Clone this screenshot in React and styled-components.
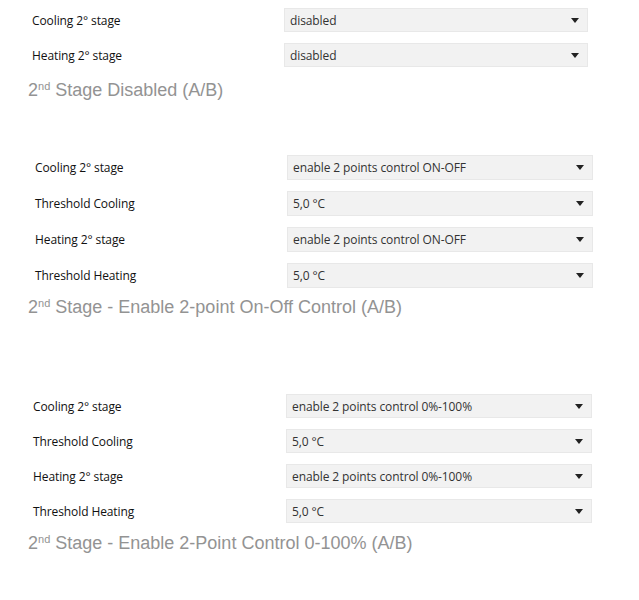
import styled, { createGlobalStyle } from "styled-components";

const GlobalStyle = createGlobalStyle`
    body {
        margin: 0;
        background: #fff;
    }
`;

const sections = [
    {
        top: 8,
        labelLeft: 32,
        labelWidth: 252,
        selectWidth: 304,
        rowHeight: 24,
        captionGap: 12,
        rows: [
            ["Cooling 2° stage", "disabled"],
            ["Heating 2° stage", "disabled"],
        ],
        caption: ["nd", " Stage Disabled (A/B)"],
    },
    {
        top: 54,
        labelLeft: 35,
        labelWidth: 252,
        selectWidth: 306,
        rowHeight: 25,
        captionGap: 8,
        rows: [
            ["Cooling 2° stage", "enable 2 points control ON-OFF"],
            ["Threshold Cooling", "5,0 °C"],
            ["Heating 2° stage", "enable 2 points control ON-OFF"],
            ["Threshold Heating", "5,0 °C"],
        ],
        caption: ["nd", " Stage - Enable 2-point On-Off Control (A/B)"],
    },
    {
        top: 76,
        labelLeft: 33,
        labelWidth: 253,
        selectWidth: 306,
        rowHeight: 24,
        captionGap: 9,
        rows: [
            ["Cooling 2° stage", "enable 2 points control 0%-100%"],
            ["Threshold Cooling", "5,0 °C"],
            ["Heating 2° stage", "enable 2 points control 0%-100%"],
            ["Threshold Heating", "5,0 °C"],
        ],
        caption: ["nd", " Stage - Enable 2-Point Control 0-100% (A/B)"],
    },
];

const App = () => {
    return <Page>
        <GlobalStyle />
        {sections.map((s, i) => (
            <Section key={i} $top={s.top}>
                <Rows $left={s.labelLeft}>
                    {s.rows.map(([label, value], j) => (
                        <Row key={j} $labelWidth={s.labelWidth}>
                            <Label>{label}</Label>
                            <Select $width={s.selectWidth} $height={s.rowHeight}>
                                <span>{value}</span>
                                <Arrow />
                            </Select>
                        </Row>
                    ))}
                </Rows>
                <Caption $gap={s.captionGap}>
                    2<sup>{s.caption[0]}</sup>{s.caption[1]}
                </Caption>
            </Section>
        ))}
    </Page>
}

const Page = styled.div`
    width: 639px;
    min-height: 600px;
    font-family: "Open Sans", "Noto Sans", sans-serif;
`;

const Section = styled.section`
    padding-top: ${(p) => p.$top}px;
    padding-left: 28px;
`;

const Rows = styled.div`
    display: flex;
    flex-direction: column;
    gap: 11px;
    padding-left: ${(p) => p.$left - 28}px;
`;

const Row = styled.div`
    display: grid;
    grid-template-columns: ${(p) => p.$labelWidth}px auto;
    align-items: center;
`;

const Label = styled.div`
    font-size: 12px;
    color: #111;
    letter-spacing: -0.1px;
`;

const Select = styled.div`
    box-sizing: border-box;
    width: ${(p) => p.$width}px;
    height: ${(p) => p.$height}px;
    background: #f2f2f2;
    border: 1px solid #e8e8e8;
    display: flex;
    align-items: center;
    justify-content: space-between;
    padding: 0 8px 0 5px;
    font-size: 12px;
    color: #333;
    letter-spacing: -0.1px;
`;

const Arrow = styled.i`
    width: 0;
    height: 0;
    border-left: 4px solid transparent;
    border-right: 4px solid transparent;
    border-top: 5px solid #222;
`;

const Caption = styled.div`
    margin-top: ${(p) => p.$gap}px;
    font-family: "Liberation Sans", Arial, sans-serif;
    font-size: 18px;
    font-weight: 400;
    color: #939393;
    line-height: 22px;

    sup {
        font-size: 11px;
        vertical-align: 6px;
        line-height: 0;
    }
`;

export default App;
